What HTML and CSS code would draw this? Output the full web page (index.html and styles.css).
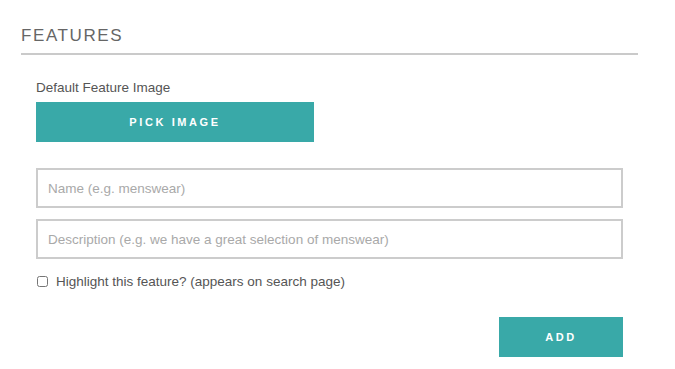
FILE: index.html
```html
<!DOCTYPE html>
<html lang="en">
<head>
    <meta charset="UTF-8">
    <meta name="viewport" content="width=device-width, initial-scale=1.0">
    <title>Features</title>
    <link rel="stylesheet" href="styles.css">
</head>
<body>
    <div class="container">
        <h2 class="section-title">Features</h2>
        <form id="feature-form" class="feature-form">
            <div class="field-label">Default Feature Image</div>
            <button type="button" class="btn btn-pick">Pick Image</button>
            <input type="text" class="text-input first" placeholder="Name (e.g. menswear)">
            <input type="text" class="text-input" placeholder="Description (e.g. we have a great selection of menswear)">
            <div class="check-row">
                <input type="checkbox" id="highlight">
                <label for="highlight">Highlight this feature? (appears on search page)</label>
            </div>
            <div class="actions">
                <button type="submit" class="btn btn-add">Add</button>
            </div>
        </form>
    </div>
</body>
</html>
```

FILE: styles.css
```css
body {
    margin: 0;
    font-family: "Liberation Sans", Arial, sans-serif;
    background: #fff;
    color: #555;
}
.container {
    width: 617px;
    margin-left: 21px;
    padding-top: 26px;
}
.section-title {
    margin: 0;
    font-size: 17px;
    line-height: 20px;
    font-weight: normal;
    text-transform: uppercase;
    letter-spacing: 1.6px;
    color: #666;
    padding-bottom: 7px;
    border-bottom: 2px solid #cacaca;
}
.feature-form {
    padding: 0 15px;
    margin-top: 25px;
}
.field-label {
    font-size: 13.5px;
    line-height: 16px;
    color: #555;
    margin-bottom: 6px;
}
.btn {
    display: block;
    height: 40px;
    border: none;
    border-radius: 0;
    background-color: #39a9a8;
    color: white;
    font-family: "Liberation Sans", Arial, sans-serif;
    font-size: 11px;
    font-weight: bold;
    text-transform: uppercase;
    letter-spacing: 2.6px;
    cursor: pointer;
}
.btn-pick {
    width: 278px;
}
.text-input {
    display: block;
    box-sizing: border-box;
    width: 100%;
    height: 40px;
    margin: 11px 0 0;
    padding: 0 10px;
    border: 2px solid #cccccc;
    border-radius: 0;
    font-family: "Liberation Sans", Arial, sans-serif;
    font-size: 13.5px;
    color: #555;
    outline: none;
}
.text-input.first {
    margin-top: 26px;
}
.text-input::placeholder {
    color: #a9a9a9;
}
.check-row {
    display: flex;
    align-items: center;
    margin-top: 12px;
    height: 20px;
    font-size: 13.5px;
    color: #555;
}
.check-row input {
    margin: 0 8px 0 1px;
    width: 11px;
    height: 11px;
}
.actions {
    display: flex;
    justify-content: flex-end;
    margin-top: 26px;
}
.btn-add {
    width: 124px;
}
```
